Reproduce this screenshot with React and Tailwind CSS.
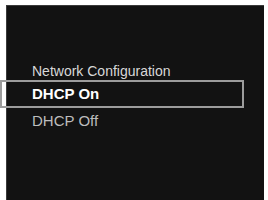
export default function App() {
  return (
    <div className="w-[268px] h-[200px] bg-white pt-[5px] pl-[6px] pr-[4px] overflow-hidden" style={{ fontFamily: '"Liberation Sans", Arial, sans-serif' }}>
      <div className="h-full bg-[#121212] border-l border-t border-[#3a3a3a] pt-[57px]">
        <div className="pl-[25px] text-[14px] leading-[16px] text-[#d8d8d8]">Network Configuration</div>
        <div className="ml-[-7px] w-[244px] h-[28px] mt-[1px] border-2 border-[#9c9c9c] flex items-center pl-[30px]">
          <span className="text-[15px] font-bold text-white">DHCP On</span>
        </div>
        <div className="pl-[25px] mt-[4px] text-[15px] leading-[17px] text-[#bdbdbd]">DHCP Off</div>
      </div>
    </div>
  )
}
